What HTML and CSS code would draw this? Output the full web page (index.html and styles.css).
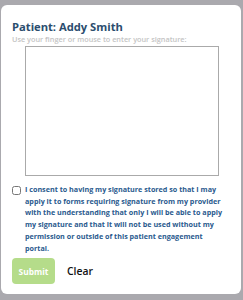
FILE: index.html
```html
<!DOCTYPE html>
<html lang="en">
<head>
  <meta charset="UTF-8">
  <title>Signature</title>
  <link rel="stylesheet" href="styles.css">
</head>
<body>
  <div class="card">
    <h1 class="title">Patient: Addy Smith</h1>
    <p class="hint">Use your finger or mouse to enter your signature:</p>
    <div class="pad-wrap">
      <canvas class="pad" width="192" height="128"></canvas>
    </div>
    <label class="consent">
      <input type="checkbox" class="check">
      <span>I consent to having my signature stored so that I may apply it to forms requiring signature from my provider with the understanding that only I will be able to apply my signature and that it will not be used without my permission or outside of this patient engagement portal.</span>
    </label>
    <div class="actions">
      <button class="submit" disabled>Submit</button>
      <button class="clear">Clear</button>
    </div>
  </div>
</body>
</html>
```

FILE: styles.css
```css
html, body { height: 100%; }
body { margin: 0; padding: 5px 2px 6px 1px; box-sizing: border-box; background: #aaa9ae; font-family: "Open Sans", sans-serif; }
.card { background: #fff; border-radius: 6px; height: 100%; box-sizing: border-box; padding: 14px 11px 0 11px; display: flex; flex-direction: column; }
.title { margin: 0; font-family: "Open Sans", sans-serif; font-size: 11.2px; font-weight: 700; color: #2b4d6e; line-height: 15px; }
.hint { margin: 0; font-size: 7.3px; font-weight: 600; color: #c4c4c4; line-height: 11px; }
.pad-wrap { display: flex; justify-content: center; margin-top: 1px; padding-left: 2px; }
.pad { width: 192px; height: 128px; border: 1px solid #aaa; display: block; }
.consent { display: flex; align-items: flex-start; margin-top: 8px; padding-right: 3px; }
.check { width: 9px; height: 9px; margin: 2px 4px 0 0; flex: none; }
.consent span { font-size: 7.2px; font-weight: 700; color: #2a5a8e; line-height: 11.7px; }
.actions { display: flex; align-items: center; margin-top: 4px; }
.submit { background: #b5dc8a; color: #fff; border: none; border-radius: 4px; width: 43px; height: 26px; font-family: "Open Sans", sans-serif; font-size: 8.4px; font-weight: 700; padding: 0; }
.clear { background: none; border: none; color: #111; font-family: "Open Sans", sans-serif; font-size: 10.4px; font-weight: 600; margin-left: 12px; padding: 0; }
```
